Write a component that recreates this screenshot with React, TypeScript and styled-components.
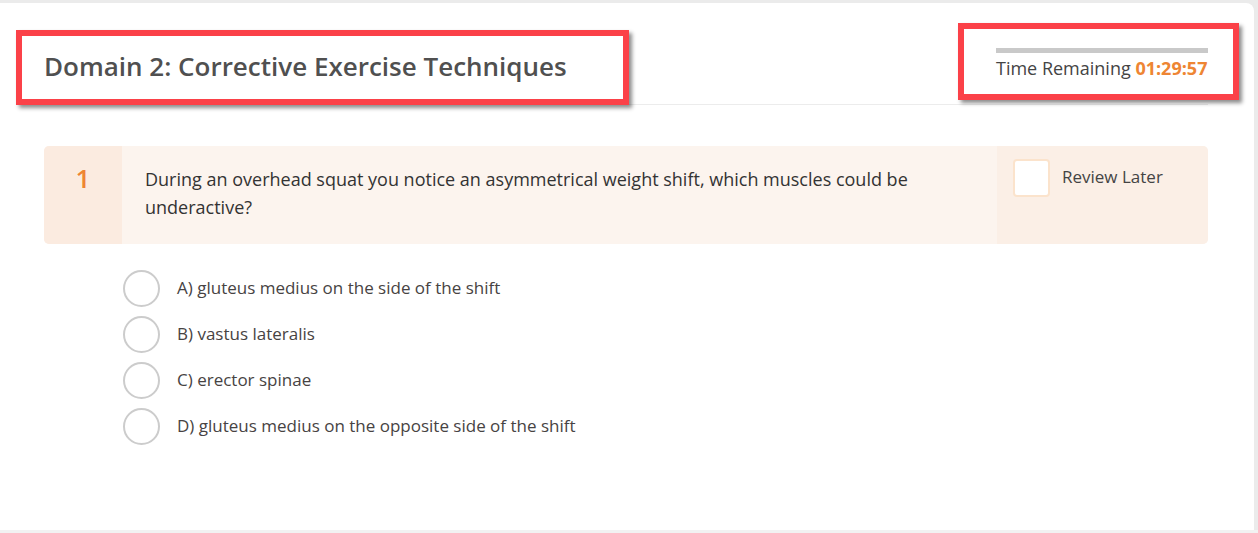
import { FC } from 'react';
import styled, { createGlobalStyle } from 'styled-components';

const GlobalStyle = createGlobalStyle`
  html, body {
    margin: 0;
    padding: 0;
    background: #f2f2f2;
  }
  body {
    font-family: 'Open Sans', 'Noto Sans', sans-serif;
  }
`;

const Page = styled.div`
  padding: 3px 4px 0 0;
  height: 530px;
  box-sizing: border-box;
  background: #ebebeb;
`;

const Card = styled.main`
  position: relative;
  height: 527px;
  background: #ffffff;
  border-radius: 0 8px 0 0;
  box-sizing: border-box;
`;

const Header = styled.header`
  display: flex;
  justify-content: space-between;
  align-items: stretch;
  height: 101px;
  margin: 0 46px 0 44px;
  border-bottom: 1px solid #ececec;
`;

const Title = styled.h1`
  position: relative;
  margin: 0;
  padding-top: 46px;
  font-size: 26px;
  line-height: 34px;
  font-weight: 600;
  color: #505050;

  &::after {
    content: '';
    position: absolute;
    left: 0;
    bottom: -1px;
    width: 35px;
    height: 2px;
    background: #e0702a;
  }
`;

const Timer = styled.div`
  display: flex;
  flex-direction: column;
  width: 212px;
  padding-top: 45px;
`;

const TimerBar = styled.div`
  height: 5px;
  background: #c9c9c9;
`;

const TimerText = styled.div`
  margin-top: 3px;
  font-size: 18px;
  line-height: 24px;
  color: #444444;
  white-space: nowrap;
`;

const TimeValue = styled.span`
  font-weight: 700;
  color: #ee8533;
`;

const QuestionCard = styled.section`
  display: grid;
  grid-template-columns: 78px 1fr 211px;
  height: 98px;
  margin: 41px 46px 0 44px;
  border-radius: 5px;
  overflow: hidden;
  background: #fcf4ee;
`;

const Number = styled.div`
  display: flex;
  justify-content: center;
  padding-top: 14px;
  background: #fbebe0;
  font-size: 26px;
  line-height: 36px;
  font-weight: 600;
  color: #ee8533;
`;

const QuestionText = styled.p`
  margin: 0;
  padding: 19px 40px 0 23px;
  font-size: 18px;
  line-height: 28px;
  color: #333333;
`;

const ReviewCell = styled.label`
  display: flex;
  align-items: flex-start;
  gap: 12px;
  padding: 13px 0 0 16px;
  background: #fbefe6;
`;

const CheckBox = styled.span`
  width: 37px;
  height: 38px;
  box-sizing: border-box;
  border: 2px solid #fbe3cc;
  border-radius: 4px;
  background: #ffffff;
`;

const ReviewText = styled.span`
  margin-top: 6px;
  font-size: 17px;
  line-height: 24px;
  color: #444444;
`;

const Options = styled.ul`
  display: flex;
  flex-direction: column;
  gap: 9px;
  margin: 26px 0 0 123px;
  padding: 0;
  list-style: none;
`;

const Option = styled.li`
  display: flex;
  align-items: center;
  gap: 17px;
`;

const Radio = styled.span`
  flex: none;
  width: 37px;
  height: 37px;
  box-sizing: border-box;
  border: 2px solid #cccccc;
  border-radius: 50%;
  background: #ffffff;
`;

const OptionText = styled.span`
  margin-top: -1px;
  font-size: 17px;
  line-height: 24px;
  color: #474343;
`;

const Highlight = styled.div<{ left: number; top: number; w: number; h: number }>`
  position: absolute;
  left: ${(p) => p.left}px;
  top: ${(p) => p.top}px;
  width: ${(p) => p.w}px;
  height: ${(p) => p.h}px;
  box-sizing: border-box;
  border: 6px solid #fb4148;
  box-shadow: 3px 3px 4px rgba(0, 0, 0, 0.45);
  pointer-events: none;
`;

const answers = [
  'A) gluteus medius on the side of the shift',
  'B) vastus lateralis',
  'C) erector spinae',
  'D) gluteus medius on the opposite side of the shift',
];

const App: FC = () => {
  return (
    <>
      <GlobalStyle />
      <Page>
        <Card>
          <Header>
            <Title>Domain 2: Corrective Exercise Techniques</Title>
            <Timer>
              <TimerBar />
              <TimerText>
                Time Remaining <TimeValue>01:29:57</TimeValue>
              </TimerText>
            </Timer>
          </Header>

          <QuestionCard>
            <Number>1</Number>
            <QuestionText>
              During an overhead squat you notice an asymmetrical weight shift, which muscles could be
              underactive?
            </QuestionText>
            <ReviewCell>
              <CheckBox />
              <ReviewText>Review Later</ReviewText>
            </ReviewCell>
          </QuestionCard>

          <Options>
            {answers.map((a) => (
              <Option key={a}>
                <Radio />
                <OptionText>{a}</OptionText>
              </Option>
            ))}
          </Options>

          <Highlight left={16} top={27} w={613} h={75} />
          <Highlight left={958} top={20} w={281} h={77} />
        </Card>
      </Page>
    </>
  );
};

export default App;
